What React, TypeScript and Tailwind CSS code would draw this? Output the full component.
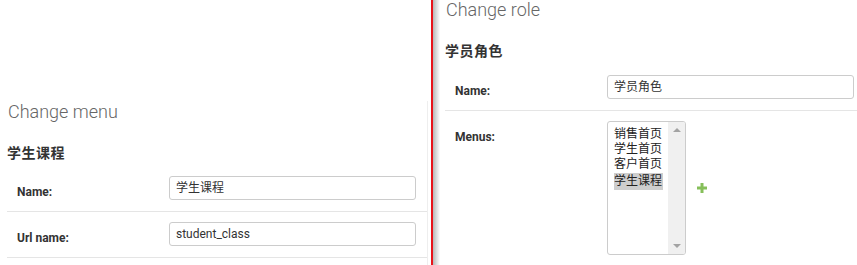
import React from "react";

const font = { fontFamily: 'Roboto, "Noto Sans CJK SC", sans-serif' };

function Row({
  label,
  children,
  last,
}: {
  label: string;
  children: React.ReactNode;
  last?: boolean;
}) {
  return (
    <div className={`flex items-start pt-[10px] pb-[11px] ${last ? "" : "border-b border-[#e5e5e5]"}`}>
      <div className="w-[162px] shrink-0 pl-[10px] pt-[8px] text-[12px] leading-4 font-bold text-[#333]">
        {label}
      </div>
      {children}
    </div>
  );
}

function TextInput({ value }: { value: string }) {
  return (
    <div className="w-[247px] h-[24px] border border-[#ccc] rounded-[3px] px-[6px] flex items-center text-[12px] text-[#333] bg-white">
      {value}
    </div>
  );
}

function Plus() {
  return (
    <svg width="10" height="10" viewBox="0 0 10 10" className="block">
      <rect x="3.5" y="0" width="3" height="10" fill="#86bf5a" />
      <rect x="0" y="3.5" width="10" height="3" fill="#86bf5a" />
    </svg>
  );
}

function Header({ title, heading, tall }: { title: string; heading: string; tall?: boolean }) {
  return (
    <>
      <div className="pl-[1px] text-[18px] leading-[22px] font-light text-[#666]">{title}</div>
      <div
        className={`mt-[19px] ${tall ? "h-[25px]" : "h-[24px]"} text-[14px] font-bold text-[#333] leading-[22px] tracking-[0.5px]`}
      >
        {heading}
      </div>
    </>
  );
}

export default function App() {
  const options = ["销售首页", "学生首页", "客户首页", "学生课程"];
  return (
    <div className="w-[857px] h-[265px] overflow-hidden bg-white flex" style={font}>
      {/* Left panel */}
      <div className="w-[431px] shrink-0 pl-[7px] pr-[3px] pt-[101px]">
        <div className="border-r border-[#eee] h-full">
          <Header title="Change menu" heading="学生课程" />
          <Row label="Name:">
            <TextInput value="学生课程" />
          </Row>
          <Row label="Url name:">
            <TextInput value="student_class" />
          </Row>
        </div>
      </div>
      {/* Divider */}
      <div className="w-[2px] shrink-0 bg-[#e8141b]" />
      <div className="w-[7px] shrink-0 bg-gradient-to-r from-[#b8b8b8] to-white" />
      {/* Right panel */}
      <div className="flex-1 pl-[5px] -mt-[1px]">
        <Header title="Change role" heading="学员角色" tall />
        <Row label="Name:">
          <TextInput value="学员角色" />
        </Row>
        <Row label="Menus:" last>
          <div className="flex items-center">
            <div className="w-[79px] h-[134px] border border-[#ccc] rounded-[3px] flex overflow-hidden bg-white">
              <div className="flex-1 pl-[6px] pt-[5px]">
                {options.map((o, i) => (
                  <div
                    key={o}
                    className={`text-[12px] leading-[15px] text-[#222] w-fit pr-[1px] ${i === 3 ? "bg-[#cecece] mt-[1px] py-[1px]" : ""}`}
                  >
                    {o}
                  </div>
                ))}
              </div>
              <div className="w-[17px] bg-[#f0f0f0] flex flex-col items-center justify-between py-[6px]">
                <div className="w-0 h-0 border-l-[4px] border-r-[4px] border-b-[4px] border-l-transparent border-r-transparent border-b-[#a3a3a3]" />
                <div className="w-0 h-0 border-l-[4px] border-r-[4px] border-t-[4px] border-l-transparent border-r-transparent border-t-[#a3a3a3]" />
              </div>
            </div>
            <div className="ml-[11px]">
              <Plus />
            </div>
          </div>
        </Row>
      </div>
    </div>
  );
}
